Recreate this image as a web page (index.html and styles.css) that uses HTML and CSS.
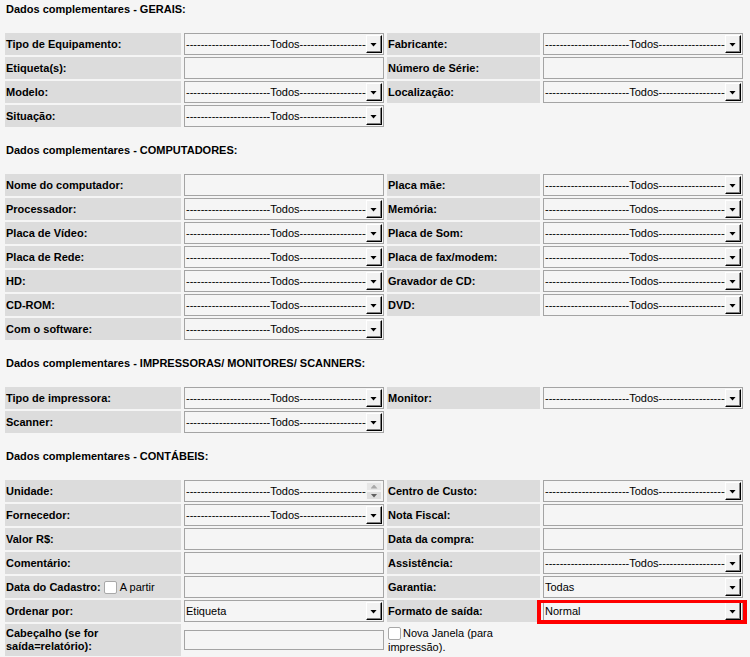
FILE: index.html
```html
<!DOCTYPE html>
<html lang="pt-BR">
<head>
<meta charset="utf-8">
<title>Dados complementares</title>
<link rel="stylesheet" href="styles.css">
</head>
<body>
<div class="page">

  <h2 class="sec first">Dados complementares - GERAIS:</h2>
  <div class="grid">
    <div class="lbl">Tipo de Equipamento:</div>
    <div class="fld"><div class="sel"><span class="val">-----------------------Todos------------------------</span><span class="btn"></span></div></div>
    <div class="lbl">Fabricante:</div>
    <div class="fld"><div class="sel"><span class="val">-----------------------Todos------------------------</span><span class="btn"></span></div></div>

    <div class="lbl">Etiqueta(s):</div>
    <div class="fld"><div class="inp"></div></div>
    <div class="lbl">Número de Série:</div>
    <div class="fld"><div class="inp"></div></div>

    <div class="lbl">Modelo:</div>
    <div class="fld"><div class="sel"><span class="val">-----------------------Todos------------------------</span><span class="btn"></span></div></div>
    <div class="lbl">Localização:</div>
    <div class="fld"><div class="sel"><span class="val">-----------------------Todos------------------------</span><span class="btn"></span></div></div>

    <div class="lbl">Situação:</div>
    <div class="fld"><div class="sel"><span class="val">-----------------------Todos------------------------</span><span class="btn"></span></div></div>
    <div></div><div></div>
  </div>

  <h2 class="sec">Dados complementares - COMPUTADORES:</h2>
  <div class="grid">
    <div class="lbl">Nome do computador:</div>
    <div class="fld"><div class="inp"></div></div>
    <div class="lbl">Placa mãe:</div>
    <div class="fld"><div class="sel"><span class="val">-----------------------Todos------------------------</span><span class="btn"></span></div></div>

    <div class="lbl">Processador:</div>
    <div class="fld"><div class="sel"><span class="val">-----------------------Todos------------------------</span><span class="btn"></span></div></div>
    <div class="lbl">Memória:</div>
    <div class="fld"><div class="sel"><span class="val">-----------------------Todos------------------------</span><span class="btn"></span></div></div>

    <div class="lbl">Placa de Vídeo:</div>
    <div class="fld"><div class="sel"><span class="val">-----------------------Todos------------------------</span><span class="btn"></span></div></div>
    <div class="lbl">Placa de Som:</div>
    <div class="fld"><div class="sel"><span class="val">-----------------------Todos------------------------</span><span class="btn"></span></div></div>

    <div class="lbl">Placa de Rede:</div>
    <div class="fld"><div class="sel"><span class="val">-----------------------Todos------------------------</span><span class="btn"></span></div></div>
    <div class="lbl">Placa de fax/modem:</div>
    <div class="fld"><div class="sel"><span class="val">-----------------------Todos------------------------</span><span class="btn"></span></div></div>

    <div class="lbl">HD:</div>
    <div class="fld"><div class="sel"><span class="val">-----------------------Todos------------------------</span><span class="btn"></span></div></div>
    <div class="lbl">Gravador de CD:</div>
    <div class="fld"><div class="sel"><span class="val">-----------------------Todos------------------------</span><span class="btn"></span></div></div>

    <div class="lbl">CD-ROM:</div>
    <div class="fld"><div class="sel"><span class="val">-----------------------Todos------------------------</span><span class="btn"></span></div></div>
    <div class="lbl">DVD:</div>
    <div class="fld"><div class="sel"><span class="val">-----------------------Todos------------------------</span><span class="btn"></span></div></div>

    <div class="lbl">Com o software:</div>
    <div class="fld"><div class="sel"><span class="val">-----------------------Todos------------------------</span><span class="btn"></span></div></div>
    <div></div><div></div>
  </div>

  <h2 class="sec">Dados complementares - IMPRESSORAS/ MONITORES/ SCANNERS:</h2>
  <div class="grid">
    <div class="lbl">Tipo de impressora:</div>
    <div class="fld"><div class="sel"><span class="val">-----------------------Todos------------------------</span><span class="btn"></span></div></div>
    <div class="lbl">Monitor:</div>
    <div class="fld"><div class="sel"><span class="val">-----------------------Todos------------------------</span><span class="btn"></span></div></div>

    <div class="lbl">Scanner:</div>
    <div class="fld"><div class="sel"><span class="val">-----------------------Todos------------------------</span><span class="btn"></span></div></div>
    <div></div><div></div>
  </div>

  <h2 class="sec">Dados complementares - CONTÁBEIS:</h2>
  <div class="grid">
    <div class="lbl">Unidade:</div>
    <div class="fld">
      <div class="list">
        <div class="opts">
          <div class="opt">-----------------------Todos------------------------</div>
          <div class="opt">&nbsp;&nbsp;&nbsp;&nbsp;Administração</div>
        </div>
        <div class="sb">
          <span class="sbb up"></span>
          <span class="sbb dn"></span>
        </div>
      </div>
    </div>
    <div class="lbl">Centro de Custo:</div>
    <div class="fld"><div class="sel"><span class="val">-----------------------Todos------------------------</span><span class="btn"></span></div></div>

    <div class="lbl">Fornecedor:</div>
    <div class="fld"><div class="sel"><span class="val">-----------------------Todos------------------------</span><span class="btn"></span></div></div>
    <div class="lbl">Nota Fiscal:</div>
    <div class="fld"><div class="inp"></div></div>

    <div class="lbl">Valor R$:</div>
    <div class="fld"><div class="inp"></div></div>
    <div class="lbl">Data da compra:</div>
    <div class="fld"><div class="inp"></div></div>

    <div class="lbl">Comentário:</div>
    <div class="fld"><div class="inp"></div></div>
    <div class="lbl">Assistência:</div>
    <div class="fld"><div class="sel"><span class="val">-----------------------Todos------------------------</span><span class="btn"></span></div></div>

    <div class="lbl">Data do Cadastro:<span class="chk"></span><span class="reg">A partir</span></div>
    <div class="fld"><div class="inp"></div></div>
    <div class="lbl">Garantia:</div>
    <div class="fld"><div class="sel"><span class="val">Todas</span><span class="btn"></span></div></div>

    <div class="lbl">Ordenar por:</div>
    <div class="fld"><div class="sel"><span class="val">Etiqueta</span><span class="btn"></span></div></div>
    <div class="lbl">Formato de saída:</div>
    <div class="fld hl"><div class="sel"><span class="val">Normal</span><span class="btn"></span></div></div>

    <div class="lbl tall">Cabeçalho (se for saída=relatório):</div>
    <div class="fld"><div class="inp short"></div></div>
    <div class="plain"><span class="chk inl"></span>Nova Janela (para impressão).</div>
    <div></div>
  </div>

</div>
</body>
</html>
```

FILE: styles.css
```css
html, body {
  margin: 0;
  padding: 0;
  background: #f5f5f5;
}

body {
  font-family: "Liberation Sans", Arial, sans-serif;
  font-size: 11px;
  color: #000;
}

.page {
  padding: 2px 0 0 5px;
}

.sec {
  margin: 16px 0 17px 1px;
  font-size: 11px;
  line-height: 14px;
  font-weight: bold;
}

.sec.first {
  margin-top: 0;
}

.grid {
  display: grid;
  grid-template-columns: 176px 202px 153px 202px;
  grid-auto-rows: minmax(22px, auto);
  gap: 2px;
}

.lbl {
  background: #dcdcdc;
  display: flex;
  align-items: center;
  padding: 0 1px;
  font-weight: bold;
  line-height: 13px;
}

.lbl.tall {
  padding: 3px 1px;
}

.fld {
  display: flex;
  align-items: center;
  padding: 0 1px;
}

.sel,
.inp,
.list {
  width: 200px;
  height: 22px;
  box-sizing: border-box;
  border: 1px solid #a4a4a4;
  background: #f5f5f5;
}

.inp.short {
  height: 20px;
}

.sel {
  display: flex;
  align-items: center;
  overflow: hidden;
}

.val {
  flex: 1;
  min-width: 0;
  overflow: hidden;
  white-space: nowrap;
  padding-left: 1px;
  line-height: 14px;
}

.btn {
  flex: none;
  width: 16px;
  height: 18px;
  margin-right: 1px;
  box-sizing: border-box;
  border-top: 1px solid #fff;
  border-left: 1px solid #fff;
  border-right: 1px solid #000;
  border-bottom: 1px solid #000;
  box-shadow: inset -1px -1px 0 #808080;
  background: #f2f2f2;
  display: flex;
  align-items: center;
  justify-content: center;
}

.btn::before {
  content: "";
  width: 7px;
  height: 4px;
  background: #000;
  clip-path: polygon(0 0, 100% 0, 50% 100%);
  margin: 1px 1px 0 0;
}

.list {
  display: flex;
  overflow: hidden;
}

.opts {
  flex: 1;
  min-width: 0;
  overflow: hidden;
  padding: 3px 0 0 1px;
}

.opt {
  white-space: nowrap;
  overflow: hidden;
  line-height: 14px;
}

.sb {
  flex: none;
  width: 16px;
  margin: 1px 1px 1px 0;
  display: flex;
  flex-direction: column;
  background: #ebebeb;
}

.sbb {
  flex: 1;
  display: flex;
  align-items: center;
  justify-content: center;
  background: #e6e6e6;
  border: 1px solid #f4f4f4;
}

.sbb::before {
  content: "";
  width: 7px;
  height: 4px;
  background: #a8a8a8;
}

.sbb.up::before {
  clip-path: polygon(50% 0, 100% 100%, 0 100%);
}

.sbb.dn {
  background: #dedede;
}

.sbb.dn::before {
  background: #606060;
  clip-path: polygon(0 0, 100% 0, 50% 100%);
}

.chk {
  display: inline-block;
  width: 13px;
  height: 13px;
  box-sizing: border-box;
  border: 1px solid #a8a8a8;
  border-radius: 2px;
  background: #fff;
  margin: 0 3px 0 3px;
}

.reg {
  font-weight: normal;
}

.plain {
  display: flex;
  align-items: center;
  padding: 2px 1px;
}

.plain {
  display: block;
  align-self: center;
  line-height: 14px;
}

.chk.inl {
  vertical-align: -3px;
  margin: 0 2px 0 0;
}

.hl {
  position: relative;
}

.hl::after {
  content: "";
  position: absolute;
  left: -5px;
  right: -3px;
  top: 0;
  bottom: -2px;
  border: 4px solid #ff0000;
  border-top-width: 3px;
  pointer-events: none;
}
```
